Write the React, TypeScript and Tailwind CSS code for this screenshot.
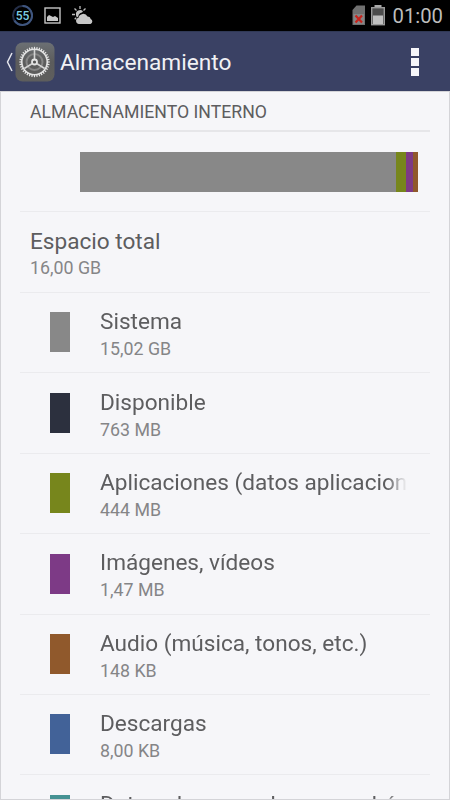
const categories = [
  { name: "Sistema", size: "15,02 GB", swatch: "bg-[#888888]" },
  { name: "Disponible", size: "763 MB", swatch: "bg-[#2c303e]" },
  { name: "Aplicaciones (datos aplicaciones)", size: "444 MB", swatch: "bg-[#77861c]" },
  { name: "Imágenes, vídeos", size: "1,47 MB", swatch: "bg-[#7d3a86]" },
  { name: "Audio (música, tonos, etc.)", size: "148 KB", swatch: "bg-[#90592c]" },
  { name: "Descargas", size: "8,00 KB", swatch: "bg-[#426298]" },
  { name: "Datos almacenados en caché", size: "3,62 MB", swatch: "bg-[#469293]" },
];

const teeth = Array.from({ length: 36 }, (_, i) => i * 10);

function SettingsIcon() {
  return (
    <svg width="40" height="40" viewBox="0 0 40 40" fill="none">
      <defs>
        <linearGradient id="plate" x1="0" y1="0" x2="0" y2="1">
          <stop offset="0" stopColor="#6c7074" />
          <stop offset="0.5" stopColor="#5c5c5c" />
          <stop offset="1" stopColor="#5e5e5d" />
        </linearGradient>
      </defs>
      <rect x="0.5" y="0.5" width="39" height="39" rx="7" fill="url(#plate)" />
      <circle cx="19.5" cy="20" r="8" stroke="#858585" strokeWidth="2" />
      <circle cx="19.5" cy="20" r="12.7" stroke="#e0e0e0" strokeWidth="1.6" />
      {teeth.map((deg) => (
        <path
          key={deg}
          d="M19.5 4.8v2.6"
          stroke="#e8e8e8"
          strokeWidth="1.2"
          transform={`rotate(${deg} 19.5 20)`}
        />
      ))}
      <path d="M19.5 17V8M17 21.7l-7.7 4.8M22 21.7l7.7 4.8" stroke="#d4d4d4" strokeWidth="1.6" />
      <circle cx="19.5" cy="20" r="2.5" fill="#555" stroke="#e4e4e4" strokeWidth="1.8" />
    </svg>
  );
}

function StatusBar() {
  return (
    <div className="flex h-[31px] shrink-0 items-center bg-black pr-[7px] pl-3">
      <div className="relative flex size-[21px] items-center justify-center">
        <svg className="absolute inset-0" width="21" height="21" viewBox="0 0 21 21" fill="none">
          <circle cx="10.5" cy="10.5" r="9.5" stroke="#252f49" strokeWidth="2" />
          <path d="M10.5 1a9.5 9.5 0 1 1-8 14.6" stroke="#3f567f" strokeWidth="2" />
        </svg>
        <span className="relative text-[12px] leading-none font-medium text-[#7ed0e5]">55</span>
      </div>
      <svg className="ml-[11px]" width="17" height="17" viewBox="0 0 17 17">
        <rect x="1" y="1" width="15" height="15" fill="none" stroke="#c5c5c5" strokeWidth="1.4" />
        <path d="M3 14v-4l2-2 2 1 2 1 2-1 3 2v3z" fill="#c8c8c8" />
      </svg>
      <svg className="ml-[11px]" width="22" height="19" viewBox="0 0 22 19">
        <path
          d="M8 0v3M2.5 2.5l2 2M0 8.5h3M13.5 2.5l-2 2M2.7 13.3l1.5-1.5"
          stroke="#bdbdbd"
          strokeWidth="1.3"
        />
        <path d="M4 9a4.2 4.2 0 0 1 7-3.8l-1 1.3C7.5 7 6.5 8.5 6.3 10.5L5 11.5A4 4 0 0 1 4 9z" fill="#c2c2c2" />
        <path
          d="M7 18a3.2 3.2 0 0 1-.5-6.3A4.8 4.8 0 0 1 15.5 10.5a3 3 0 0 1 3.2 2.6A2.6 2.6 0 0 1 18.5 18z"
          fill="#c6c6c6"
        />
      </svg>
      <svg className="ml-auto" width="14" height="21" viewBox="0 0 14 21">
        <path d="M4.5 0.5H13V20H0.5V5z" fill="#707070" />
        <rect x="1.5" y="9" width="10.5" height="10" fill="#858585" />
        <path d="M3.5 10.5l6.5 7M10 10.5l-6.5 7" stroke="#c8231c" strokeWidth="2.2" />
      </svg>
      <svg className="ml-[5px]" width="14" height="21" viewBox="0 0 14 21">
        <path d="M3.5 0h7v2h-7z" fill="#aaa" />
        <rect x="0.7" y="2.7" width="12.6" height="17" fill="#4c4c4c" stroke="#9a9a9a" strokeWidth="1.4" />
        <rect x="2" y="10.5" width="10" height="8.5" fill="#c0c0c0" />
      </svg>
      <span className="mt-0.5 ml-[7px] text-[20.3px] leading-[31px] text-[#bdbdbd]">01:00</span>
    </div>
  );
}

export default function App() {
  return (
    <div className="flex h-[800px] w-[450px] flex-col overflow-hidden bg-[#f6f6f9] font-['Roboto',sans-serif] text-[#5d5d5f]">
      <StatusBar />
      <header className="flex h-[60px] shrink-0 items-center border-t border-[#303956] bg-[#3a4164] pl-1.5">
        <svg width="8" height="20" viewBox="0 0 8 20" fill="none">
          <path d="M6 1L1.5 10 6 19" stroke="#e4e5ec" strokeWidth="1.5" />
        </svg>
        <div className="ml-[1px]">
          <SettingsIcon />
        </div>
        <h1 className="mt-0.5 ml-[5px] text-[22.7px] leading-9 text-[#f1f1f4]">Almacenamiento</h1>
        <div className="mr-[31px] ml-auto flex flex-col gap-[2px]">
          <i className="size-2 bg-[#f6f6f9]" />
          <i className="size-2 bg-[#f6f6f9]" />
          <i className="size-2 bg-[#f6f6f9]" />
        </div>
      </header>
      <main className="min-h-0 flex-1 overflow-hidden border-x border-t border-b border-[#d4d4d8] px-[19px]">
        <h2 className="h-[40px] border-b-2 border-[#e6e6e9] px-2.5 pt-[6px] text-[17.7px] leading-[29px]">
          ALMACENAMIENTO INTERNO
        </h2>
        <div className="h-20 border-b border-[#ebebee] pt-[20px] pr-[12.5px] pl-[60px]">
          <div className="flex h-10 bg-[#888888]">
            <div className="ml-auto w-[10px] bg-[#77861c]" />
            <div className="w-[7px] bg-[#7d3a86]" />
            <div className="w-[4.5px] bg-[#90592c]" />
          </div>
        </div>
        <div className="h-[81px] border-b border-[#ebebee] px-2.5 pt-[16px]">
          <p className="text-[22.6px] leading-7">Espacio total</p>
          <p className="text-[17.8px] leading-6 text-[#858587]">16,00 GB</p>
        </div>
        {categories.map((c) => (
          <div
            key={c.name}
            className="flex h-[80.4px] items-start border-b border-[#ebebee] pl-[30px]"
          >
            <div className={`mt-[19.4px] h-10 w-5 shrink-0 ${c.swatch}`} />
            <div className="ml-[30px] min-w-0 pt-[15.2px]">
              <p className="w-[307px] overflow-hidden mask-r-from-[calc(100%-20px)] mask-r-to-100% text-[22.6px] leading-7 whitespace-nowrap">
                {c.name}
              </p>
              <p className="text-[17.8px] leading-[25px] text-[#858587]">{c.size}</p>
            </div>
          </div>
        ))}
      </main>
    </div>
  );
}
